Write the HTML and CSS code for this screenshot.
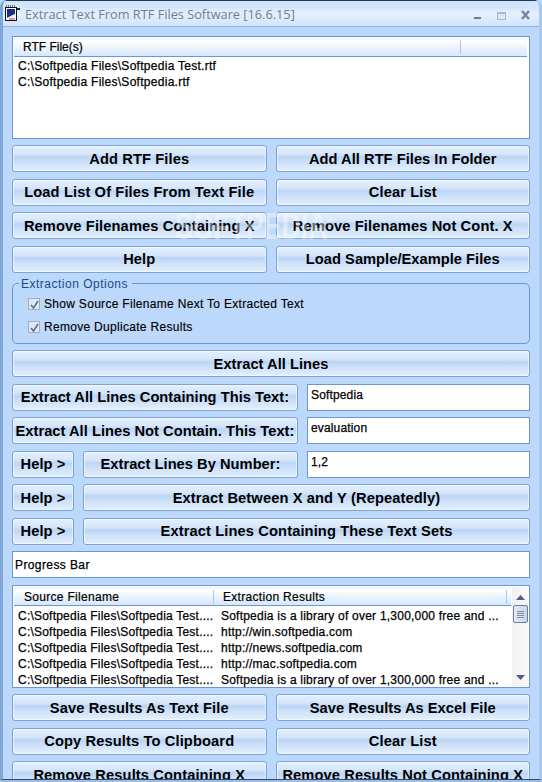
FILE: index.html
```html
<!DOCTYPE html>
<html lang="en">
<head>
    <meta charset="UTF-8">
    <title>Extract Text From RTF Files Software</title>
    <link rel="stylesheet" href="styles.css">
</head>
<body>
    <div class="window">
        <div class="titlebar">
            <svg class="app-icon" width="17" height="17" viewBox="0 0 17 17">
                <rect x="0.5" y="2.5" width="11" height="13" fill="#fff" stroke="#111"/>
                <path d="M2 4h8v5L2 13z" fill="#1c2f7a"/>
                <path d="M2 13l8-4v2l-3 3H2z" fill="#e8eef8"/>
                <path d="M4 14h6" stroke="#c33" stroke-width="1"/>
                <path d="M1 1h1M3 1h1M5 1h1M7 1h1M9 1h1" stroke="#111"/>
                <path d="M12 3h3v2h-3z" fill="#222"/>
            </svg>
            <span class="title-text">Extract Text From RTF Files Software [16.6.15]</span>
            <div class="controls">
                <svg width="60" height="14" viewBox="0 0 60 14">
                    <rect x="2" y="10" width="7" height="2" fill="#6f7f95"/>
                    <rect x="25.500" y="5.500" width="8" height="7" fill="#dbe7f6" stroke="#a9bad0"/>
                    <rect x="25" y="5" width="9" height="2" fill="#a9bad0"/>
                    <path d="M50 4l7 8M57 4l-7 8" stroke="#6f86a6" stroke-width="2.4"/>
                </svg>
            </div>
        </div>

        <div class="content">
            <div class="listbox files">
                <div class="list-head">
                    <span class="col-files">RTF File(s)</span>
                    <span class="col-rest"></span>
                </div>
                <div class="list-row">C:\Softpedia Files\Softpedia Test.rtf</div>
                <div class="list-row">C:\Softpedia Files\Softpedia.rtf</div>
            </div>

            <div class="row two first">
                <button class="btn">Add RTF Files</button>
                <button class="btn tight">Add All RTF Files In Folder</button>
            </div>
            <div class="row two">
                <button class="btn">Load List Of Files From Text File</button>
                <button class="btn">Clear List</button>
            </div>
            <div class="row two">
                <button class="btn">Remove Filenames Containing X</button>
                <button class="btn">Remove Filenames Not Cont. X</button>
            </div>
            <div class="row two">
                <button class="btn">Help</button>
                <button class="btn tight">Load Sample/Example Files</button>
            </div>

            <fieldset class="options">
                <legend>Extraction Options</legend>
                <label class="check"><span class="box"><svg width="9" height="9" viewBox="0 0 9 9"><path d="M1 5l2.500 3L8 1" fill="none" stroke="#5f6f86" stroke-width="1.6"/></svg></span>Show Source Filename Next To Extracted Text</label>
                <label class="check"><span class="box"><svg width="9" height="9" viewBox="0 0 9 9"><path d="M1 5l2.500 3L8 1" fill="none" stroke="#5f6f86" stroke-width="1.6"/></svg></span>Remove Duplicate Results</label>
            </fieldset>

            <div class="row">
                <button class="btn grow tight">Extract All Lines</button>
            </div>
            <div class="row field-row">
                <button class="btn grow tight">Extract All Lines Containing This Text:</button>
                <div class="field">Softpedia</div>
            </div>
            <div class="row field-row">
                <button class="btn grow tight">Extract All Lines Not Contain. This Text:</button>
                <div class="field">evaluation</div>
            </div>
            <div class="row field-row">
                <button class="btn help">Help &gt;</button>
                <button class="btn grow tight">Extract Lines By Number:</button>
                <div class="field">1,2</div>
            </div>
            <div class="row">
                <button class="btn help">Help &gt;</button>
                <button class="btn grow">Extract Between X and Y (Repeatedly)</button>
            </div>
            <div class="row">
                <button class="btn help">Help &gt;</button>
                <button class="btn grow">Extract Lines Containing These Text Sets</button>
            </div>
            <div class="row">
                <div class="field progress">Progress Bar</div>
            </div>

            <div class="listbox results">
                <div class="results-main">
                    <div class="list-head">
                        <span class="col-source">Source Filename</span>
                        <span class="col-result">Extraction Results</span>
                    </div>
                    <div class="result-row"><span>C:\Softpedia Files\Softpedia Test....</span><span>Softpedia is a library of over 1,300,000 free and ...</span></div>
                    <div class="result-row"><span>C:\Softpedia Files\Softpedia Test....</span><span>http://win.softpedia.com</span></div>
                    <div class="result-row"><span>C:\Softpedia Files\Softpedia Test....</span><span>http://news.softpedia.com</span></div>
                    <div class="result-row"><span>C:\Softpedia Files\Softpedia Test....</span><span>http://mac.softpedia.com</span></div>
                    <div class="result-row"><span>C:\Softpedia Files\Softpedia Test....</span><span>Softpedia is a library of over 1,300,000 free and ...</span></div>
                </div>
                <div class="scrollbar">
                    <svg class="arrow" width="9" height="5" viewBox="0 0 9 5"><path d="M4.500 0L9 5H0z" fill="#4a5f82"/></svg>
                    <div class="thumb"><i></i><i></i><i></i><i></i></div>
                    <svg class="arrow down" width="9" height="5" viewBox="0 0 9 5"><path d="M0 0h9L4.500 5z" fill="#4a5f82"/></svg>
                </div>
            </div>

            <div class="row two first">
                <button class="btn">Save Results As Text File</button>
                <button class="btn tight">Save Results As Excel File</button>
            </div>
            <div class="row two">
                <button class="btn">Copy Results To Clipboard</button>
                <button class="btn">Clear List</button>
            </div>
            <div class="row two">
                <button class="btn">Remove Results Containing X</button>
                <button class="btn">Remove Results Not Containing X</button>
            </div>

            <div class="watermark">SOFTPEDIA<sup>®</sup></div>
        </div>
    </div>
</body>
</html>
```

FILE: styles.css
```css
html, body {
    margin: 0;
    padding: 0;
    height: 782px;
    overflow: hidden;
    background: #bcd8fb;
}
body {
    font-family: "Liberation Sans", Arial, sans-serif;
    color: #000;
}
.window {
    height: 780px;
    box-sizing: border-box;
    background: #bcd8fb;
    border-left: 3px solid #7fa6d9;
    border-right: 3px solid #a9c8ee;
    border-bottom: 1px solid #2f4d73;
    box-shadow: 0 3px 0 #9fbde2;
    border-radius: 7px 7px 0 0;
    overflow: hidden;
    position: relative;
}
.titlebar {
    height: 27px;
    box-sizing: border-box;
    margin-left: -3px;
    margin-right: -3px;
    padding-left: 5px;
    display: flex;
    align-items: center;
    border-top: 1px solid #1d3a5f;
    border-bottom: 1px solid #8db4e8;
    background: linear-gradient(to bottom, #cfe2f9 0%, #d6e6fa 25%, #e4effc 50%, #d3e4f9 100%);
}
.app-icon {
    flex: none;
    margin-right: 3px;
}
.title-text {
    font-family: "Open Sans", sans-serif;
    font-size: 12.75px;
    color: #6d7f96;
}
.controls {
    margin-left: auto;
    margin-right: 10px;
    display: flex;
}
.content {
    padding: 0 9px;
    position: relative;
}
.listbox {
    background: #fff;
    border: 1px solid #6d97d3;
    font-size: 12px;
    box-sizing: border-box;
}
.files {
    height: 103px;
    margin-top: 9px;
    padding: 1px 2px 0 1px;
}
.list-head {
    height: 19px;
    box-sizing: border-box;
    display: flex;
    align-items: center;
    border-bottom: 1px solid #6d97d3;
    background: linear-gradient(to bottom, #eaf3fe 0%, #fff 15%, #d6e7fb 100%);
    font-size: 12px;
    -webkit-text-stroke: 0.2px #000;
}
.col-files {
    width: 447px;
    box-sizing: border-box;
    padding-left: 9px;
    border-right: 1px solid #a9c8ee;
}
.list-row {
    height: 16px;
    line-height: 16px;
    padding-left: 4px;
    letter-spacing: 0.28px;
    -webkit-text-stroke: 0.25px #000;
}
.files .list-head + .list-row {
    margin-top: 1px;
}
.row {
    display: flex;
    gap: 9px;
    margin-top: 6.5px;
    height: 27px;
}
.row.first {
    margin-top: 6px;
}
.two .btn {
    flex: 1 1 0;
}
.btn {
    box-sizing: border-box;
    height: 100%;
    min-width: 0;
    padding: 0;
    margin: 0;
    font-family: "Liberation Sans", Arial, sans-serif;
    font-size: 14.67px;
    font-weight: bold;
    letter-spacing: 0.12px;
    color: #000;
    white-space: nowrap;
    border: 1px solid #7ea1d6;
    border-radius: 3px;
    box-shadow: inset 1px 1px 0 rgba(255, 255, 255, 0.6), inset -1px -1px 0 rgba(255, 255, 255, 0.5);
    background: linear-gradient(to bottom, #e3effd 0%, #d6e7fb 30%, #bdd5f3 45%, #c9def8 60%, #e4f0fd 100%);
}
.tight {
    letter-spacing: 0.03px;
}
.grow {
    flex: 1 1 0;
}
.help {
    flex: none;
    width: 62px;
}
.options {
    margin: 4px 0 1px;
    padding: 2px 0 0 15px;
    height: 67px;
    box-sizing: border-box;
    border: 1px solid #6d97d3;
    border-radius: 5px;
    position: relative;
}
.options legend {
    font-size: 12px;
    color: #1b4a8a;
    padding: 0 4px 0 2px;
    margin-left: -9px;
    line-height: 14px;
    letter-spacing: 0.5px;
}
.check {
    display: flex;
    align-items: center;
    font-size: 12px;
    height: 23px;
    letter-spacing: 0.3px;
    -webkit-text-stroke: 0.15px #000;
}
.box {
    width: 12px;
    height: 12px;
    box-sizing: border-box;
    border: 1px solid #9fb0c6;
    background: #dfe9f6;
    margin-right: 4px;
    display: flex;
    align-items: center;
    justify-content: center;
    -webkit-text-stroke: 0;
}
.field-row .field {
    flex: none;
    width: 223px;
}
.field {
    box-sizing: border-box;
    height: 100%;
    background: #fff;
    border: 1px solid #6d97d3;
    font-size: 12px;
    padding: 3px 0 0 3px;
    letter-spacing: 0.15px;
    -webkit-text-stroke: 0.25px #000;
}
.progress {
    flex: 1 1 0;
    padding: 6px 0 0 2px;
    letter-spacing: 0.4px;
}
.results {
    height: 103px;
    margin-top: 7px;
    padding: 1px 1px 1px 1px;
    display: flex;
}
.results-main {
    flex: 1 1 0;
    min-width: 0;
}
.results .list-head {
    padding-top: 2px;
    letter-spacing: 0.3px;
}
.col-source {
    width: 200px;
    box-sizing: border-box;
    padding-left: 10px;
    border-right: 1px solid #a9c8ee;
}
.col-result {
    flex: 1;
    padding-left: 9px;
    border-right: 1px solid #a9c8ee;
    margin-right: 4px;
}
.results .list-head + .result-row {
    margin-top: 2px;
}
.result-row {
    display: flex;
    height: 16px;
    line-height: 16px;
    letter-spacing: 0.22px;
    -webkit-text-stroke: 0.25px #000;
}
.result-row span:first-child {
    width: 207px;
    flex: none;
    padding-left: 4px;
    box-sizing: border-box;
}
.scrollbar {
    width: 17px;
    flex: none;
    box-sizing: border-box;
    background: linear-gradient(to right, #f1f1f1, #f8f8f8);
    display: flex;
    flex-direction: column;
    align-items: center;
    border-left: 1px solid #fff;
}
.arrow {
    margin-top: 8px;
}
.arrow.down {
    margin-top: auto;
    margin-bottom: 6px;
}
.thumb {
    width: 15px;
    height: 18px;
    box-sizing: border-box;
    margin-top: 5px;
    border: 1px solid #6b7fa6;
    border-radius: 2px;
    background: linear-gradient(to right, #e6eaf2, #c9d6e8);
    display: flex;
    flex-direction: column;
    align-items: center;
    justify-content: center;
    gap: 1px;
}
.thumb i {
    display: block;
    width: 7px;
    height: 1px;
    background: #7f8ea6;
}
.watermark {
    position: absolute;
    left: 172px;
    top: 170px;
    font-size: 37px;
    font-weight: bold;
    color: rgba(255, 255, 255, 0.42);
    transform: scaleX(0.72);
    transform-origin: left top;
    white-space: nowrap;
    pointer-events: none;
}
.watermark sup {
    font-size: 12px;
}
```
